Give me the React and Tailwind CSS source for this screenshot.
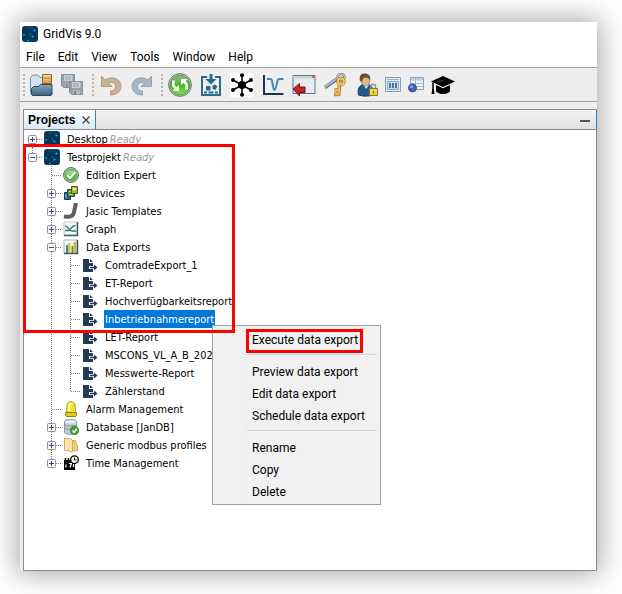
const MENUS = ["File", "Edit", "View", "Tools", "Window", "Help"];

/* ---------- toolbar icons ---------- */

function OpenIcon() {
    return (
        <svg width="24" height="24" viewBox="0 0 24 24">
            <defs>
                <linearGradient id="openFront" x1="0" y1="0" x2="0" y2="1">
                    <stop offset="0" stopColor="#86a3bd" />
                    <stop offset="1" stopColor="#3c627f" />
                </linearGradient>
                <linearGradient id="openBox" x1="0" y1="0" x2="0" y2="1">
                    <stop offset="0" stopColor="#fbd9a0" />
                    <stop offset="1" stopColor="#e0943a" />
                </linearGradient>
            </defs>
            <path d="M.5 20V4.500L3 2h5l2 2.500h4V20z" fill="#d5e1f0" stroke="#7d8fa6" />
            <path d="M12.500 1.500h9v9h-9z" fill="url(#openBox)" stroke="#8a6535" />
            <path d="M12.500 5h9" stroke="#b98543" />
            <path d="M1.500 15.500l2-2h5l2-2h11.500v10l-1 1H2.500l-1-1z" fill="url(#openFront)" stroke="#2b465c" />
        </svg>
    );
}

function Floppy({ x, y }) {
    return (
        <g transform={`translate(${x} ${y})`}>
            <path d="M.5.5h13v13h-11l-2-2z" fill="#97a1aa" stroke="#858f98" />
            <path d="M3 1h8.500v6H3z" fill="#c9ced2" />
            <path d="M4 3h6M4 5h6" stroke="#9aa3aa" />
            <path d="M4 9.500h7V13H4z" fill="#b9bfc4" />
            <path d="M5 10h2v3H5z" fill="#7c868f" />
        </g>
    );
}

function SaveAllIcon() {
    return (
        <svg width="24" height="24" viewBox="0 0 24 24">
            <Floppy x={0} y={1} />
            <Floppy x={8} y={8} />
        </svg>
    );
}

function UndoIcon() {
    return (
        <svg width="24" height="24" viewBox="0 0 24 24">
            <path
                d="M2.500 3v10.500H13L9.500 10c3-1.800 7 .200 7 3.700 0 2.800-2.200 4.300-5 4.300v4c6 0 10.500-3.400 10.500-8.800C22 6 13 2.200 6.300 7z"
                fill="#c9b296"
                stroke="#b39d82"
            />
        </svg>
    );
}

function RedoIcon() {
    return (
        <svg width="24" height="24" viewBox="0 0 24 24">
            <path
                d="M21.500 3v10.500H11L14.500 10c-3-1.800-7 .200-7 3.700 0 2.800 2.200 4.300 5 4.300v4C6.500 22 2 18.600 2 13.200 2 6 11 2.200 17.700 7z"
                fill="#a3b7c6"
                stroke="#8da3b3"
            />
        </svg>
    );
}

function SyncIcon() {
    return (
        <svg width="24" height="24" viewBox="0 0 24 24">
            <defs>
                <linearGradient id="syncFill" x1="0" y1="0" x2="0" y2="1">
                    <stop offset="0" stopColor="#93b98a" />
                    <stop offset=".5" stopColor="#4cb52c" />
                    <stop offset="1" stopColor="#7bea3c" />
                </linearGradient>
            </defs>
            <circle cx="12" cy="12" r="11.400" fill="#c0c4be" stroke="#6e766c" />
            <circle cx="12" cy="12" r="9.800" fill="url(#syncFill)" stroke="#49913a" strokeWidth=".8" />
            <path d="M4 7.500h3l-.5 4.500 2 2.300L11 12v6H4.500l2-2.200L4 13z" fill="#fff" />
            <path d="M20 16.500h-3l.5-4.500-2-2.300L13 12V6h6.500l-2 2.200L20 11z" fill="#fff" />
        </svg>
    );
}

function ImportIcon() {
    return (
        <svg width="24" height="24" viewBox="0 0 24 24" fill="none" stroke="#2b6c8c">
            <path d="M8 4H3v18h18V4h-5" strokeWidth="2" />
            <path d="M12 1v6" strokeWidth="3" />
            <path d="M6.500 6h11L12 11.500z" fill="#2b6c8c" stroke="none" />
            <path d="M7 13h4.500v4.500H7zM13.500 12.500l2.500-1 2.500 2-2 3.500-3-1z" fill="#2b6c8c" stroke="none" />
            <path d="M5 19.500h3M9.500 19.500h5M16 19.500h3" strokeWidth="2" />
        </svg>
    );
}

function HubIcon() {
    return (
        <svg width="24" height="24" viewBox="0 0 24 24">
            <path d="M0 0h24v24H0z" fill="#fff" />
            <path d="M12 2v20M3 7l18 10M21 7L3 17" stroke="#000" strokeWidth="1.500" />
            <circle cx="12" cy="12" r="4" />
            <circle cx="12" cy="2.200" r="2" />
            <circle cx="12" cy="21.800" r="2" />
            <circle cx="3" cy="7" r="2" />
            <circle cx="21" cy="7" r="2" />
            <circle cx="3" cy="17" r="2" />
            <circle cx="21" cy="17" r="2" />
        </svg>
    );
}

function CurveIcon() {
    return (
        <svg width="24" height="24" viewBox="0 0 24 24" fill="none">
            <path d="M3 2v19H22.500" stroke="#1c3252" strokeWidth="2" />
            <path d="M6 6h3.500c1.500 0 1.500 2 2 4.500S12.500 17 13.500 17s2-5 2.500-7 .500-4 2-4h4.500" stroke="#4a84bd" strokeWidth="2" />
        </svg>
    );
}

function BackWindowIcon() {
    return (
        <svg width="24" height="24" viewBox="0 0 24 24">
            <path d="M1 2.500h22v18H1z" fill="#e6edf0" stroke="#5b7482" />
            <path d="M1.500 3h21v2.500h-21z" fill="#c3d1d8" />
            <path d="M20.500 3h2v2h-2z" fill="#e0473c" />
            <path d="M1 16l6.500-5.500V14H13v5.500H7.500V23z" fill="#c4272b" stroke="#7e1013" />
        </svg>
    );
}

function KeysIcon() {
    return (
        <svg width="24" height="24" viewBox="0 0 24 24">
            <path d="M2 14.500L14 6" stroke="#6d7880" strokeWidth="3.500" />
            <path d="M2 14L14 5.500" stroke="#c4ccd1" strokeWidth="1.500" />
            <circle cx="18" cy="4.500" r="3.500" fill="none" stroke="#7d8388" strokeWidth="2.600" />
            <circle cx="18" cy="4.500" r="3.500" fill="none" stroke="#c5cbd0" strokeWidth="1.200" />
            <circle cx="18" cy="8.500" r="3" fill="none" stroke="#9b6a1b" strokeWidth="3.400" />
            <circle cx="18" cy="8.500" r="3" fill="none" stroke="#f5cd62" strokeWidth="2" />
            <path d="M16.500 12l-1 11M15.500 17h-4M15 21.500h-4" stroke="#a5701c" strokeWidth="3.500" />
            <path d="M16.500 11l-1 11.500M15.500 17H12M15 21.500h-3.500" stroke="#f3c04c" strokeWidth="2" />
        </svg>
    );
}

function UserLockIcon() {
    return (
        <svg width="24" height="24" viewBox="0 0 24 24">
            <path d="M4.500 22C3 15 6 12.500 9 11.500h5c4 1 5.500 4 5 10.500-5 1.500-10 1.500-14.500 0z" fill="#235a8e" stroke="#143c62" />
            <path d="M10 12l2 4 3-4z" fill="#e4eef5" />
            <path d="M7 6c0-6 9-6 9 0 0 4-2 7-4.500 7S7 10 7 6z" fill="#e2b48a" stroke="#8d6743" strokeWidth=".6" />
            <path d="M6 8C4.800 2 7.500.5 10.500.5c4 0 6.500 2.500 5.500 6L13 4.500 9.500 5 8 8.500z" fill="#6a4f37" />
            <path d="M17 16v-2.500c0-3 4.500-3 4.500 0V16" fill="none" stroke="#8f969a" strokeWidth="1.500" />
            <path d="M15.500 15.500h8v7h-8z" fill="#f0d656" stroke="#8a7420" />
            <path d="M19.500 18v2.500" stroke="#725c10" />
        </svg>
    );
}

function PanelIcon() {
    return (
        <svg width="16" height="16" viewBox="0 0 16 16">
            <path d="M.5.5h15v14H.5z" fill="#e3ebf3" stroke="#849cb4" />
            <path d="M2 2.500h12" stroke="#9bb4cb" />
            <path d="M2.500 4.500h11v8h-11z" fill="#c8d9e8" stroke="#8eaac5" />
            <path d="M5 6v5M8 6v5M11 6v5" stroke="#487aa6" strokeWidth="2" />
        </svg>
    );
}

function TableBallIcon() {
    return (
        <svg width="16" height="16" viewBox="0 0 16 16">
            <path d="M2.500.5h13v12h-13z" fill="#f2f6fa" stroke="#8ba1b6" />
            <path d="M3 1h12v2.500H3z" fill="#b9cfe3" />
            <path d="M3 6.500h12M3 9.500h12M7.500 1v11" stroke="#a5b9cb" />
            <circle cx="4.500" cy="11" r="4" fill="#4660b8" stroke="#293d80" strokeWidth=".8" />
            <circle cx="3.500" cy="9.600" r="1.500" fill="#8ea3e6" />
        </svg>
    );
}

function GraduationIcon() {
    return (
        <svg width="24" height="24" viewBox="0 0 24 24">
            <path d="M12 3l12 5.500L12 14 0 8.500z" />
            <path d="M5 12l7 3.200L19 12v6.500c-3.500 3.400-10.500 3.400-14 0z" />
            <path d="M2 9.500v8" stroke="#000" strokeWidth="1.500" />
            <path d="M.5 21l.800-5h1.500l.800 5z" />
            <path d="M6 8.700l6-1" stroke="#777" strokeWidth=".6" />
        </svg>
    );
}

const TOOL_GROUPS = [
    [
        { label: "Open project", Icon: OpenIcon },
        { label: "Save all", Icon: SaveAllIcon },
    ],
    [
        { label: "Undo", Icon: UndoIcon },
        { label: "Redo", Icon: RedoIcon },
    ],
    [
        { label: "Synchronise", Icon: SyncIcon },
        { label: "Import", Icon: ImportIcon },
        { label: "Topology", Icon: HubIcon },
        { label: "Event browser", Icon: CurveIcon },
        { label: "Reset windows", Icon: BackWindowIcon },
        { label: "Licenses", Icon: KeysIcon },
        { label: "Users", Icon: UserLockIcon },
        { label: "Charts", Icon: PanelIcon },
        { label: "Tables", Icon: TableBallIcon },
        { label: "Tutorials", Icon: GraduationIcon },
    ],
];

/* ---------- tree icons ---------- */

function LogoIcon() {
    return (
        <svg width="16" height="16" viewBox="0 0 16 16" className="shrink-0">
            <rect width="16" height="16" rx="3" fill="#04375a" />
            <path d="M4 0h8v3H4z" fill="#0a4164" />
            <circle cx="12.500" cy="4.500" r="1.100" fill="#1fb6e8" />
            <circle cx="8.500" cy="8" r=".8" fill="#1d94c4" />
            <circle cx="10.500" cy="10.500" r="1" fill="#1fb6e8" />
            <circle cx="2" cy="9" r=".9" fill="#1d9fd0" />
            <circle cx="6" cy="14.500" r=".8" fill="#22c0ee" />
        </svg>
    );
}

function CheckIcon() {
    return (
        <svg width="16" height="16" viewBox="0 0 16 16">
            <circle cx="8" cy="8" r="7.500" fill="#b9c2b8" stroke="#69766a" />
            <circle cx="8" cy="8" r="6.300" fill="#55b63e" />
            <path d="M2.500 6.500a6 6 0 0 1 11 0C10 9 6 9 2.500 6.500z" fill="#93d183" />
            <path d="M4 8l3 3 5.500-6" fill="none" stroke="#fff" strokeWidth="2" />
        </svg>
    );
}

function DevicesIcon() {
    return (
        <svg width="16" height="16" viewBox="0 0 16 16">
            <path d="M1.500 7.500h6v7h-6z" fill="#2f62a8" stroke="#173c70" />
            <path d="M4.500 4.500h7v7h-7z" fill="#4d8f3a" stroke="#1e5420" />
            <path d="M8.500 1.500h6v7h-6z" fill="#a9b83c" stroke="#4a5a10" />
            <path d="M10 3h3v2h-3z" fill="#e9efa4" />
            <path d="M6 6.500h2M6 9.500h4M3 9.500v3" stroke="#b4dc8c" />
        </svg>
    );
}

function JasicIcon() {
    return (
        <svg width="16" height="16" viewBox="0 0 16 16">
            <path d="M13 0L10.800 10c-.8 3.400-4 4.500-9.800 3.500" fill="none" stroke="#5d5f61" strokeWidth="4" />
        </svg>
    );
}

function GraphIcon() {
    return (
        <svg width="16" height="16" viewBox="0 0 16 16">
            <path d="M1 1h13v13H1z" fill="#f4faf7" stroke="#b8c6c2" />
            <path d="M14.500 1v13.500H1" fill="none" stroke="#45605d" strokeWidth="1.500" />
            <path d="M2 5c3 0 4 5 7 5h4" fill="none" stroke="#26865c" strokeWidth="1.300" />
            <path d="M2 9.500h3C8 9 8 4.500 12.500 4.500" fill="none" stroke="#3c6f76" strokeWidth="1.300" />
        </svg>
    );
}

function BarsIcon() {
    return (
        <svg width="16" height="16" viewBox="0 0 16 16">
            <path d="M1 1h13v13H1z" fill="#f5f8f9" stroke="#a9b7bd" />
            <path d="M14.500 1v13.500H1" fill="none" stroke="#405866" strokeWidth="1.500" />
            <path d="M3 6h2v8H3z" fill="#3d80a8" />
            <path d="M5 4h2.500v10H5z" fill="#dbc63a" />
            <path d="M8.500 7h2v7h-2z" fill="#4b9a5b" />
            <path d="M10.500 3h2.500v11h-2.500z" fill="#d5b72c" />
        </svg>
    );
}

function ExportIcon() {
    return (
        <svg width="16" height="16" viewBox="0 0 16 16">
            <path d="M1 2h6v4h4v3H7v3h4v3H1z" fill="#243a56" />
            <path d="M8 2l3 3H8z" fill="#243a56" />
            <path d="M8 10.500h5" stroke="#243a56" strokeWidth="1.600" />
            <path d="M12 7.500l3.500 3-3.500 3z" fill="#243a56" />
        </svg>
    );
}

function AlarmIcon() {
    return (
        <svg width="16" height="16" viewBox="0 0 16 16">
            <path d="M3.500 12L4 4c.5-4.600 7.500-4.600 8 0l.5 8z" fill="#f4e32c" stroke="#b5a11a" />
            <path d="M6 10.500l.5-6C6.800 3 7.500 2.500 8.500 2.500" fill="none" stroke="#fffbb5" strokeWidth="2" />
            <path d="M2.500 11.500h11v3l-1 1h-9l-1-1z" fill="#e0cd22" stroke="#8b7c18" />
        </svg>
    );
}

function DatabaseIcon() {
    return (
        <svg width="16" height="16" viewBox="0 0 16 16">
            <path d="M1.500 2.500c0-2.600 12-2.600 12 0v11c0 2.400-12 2.400-12 0z" fill="#c3d0d6" stroke="#8c9aa1" />
            <ellipse cx="7.500" cy="2.700" rx="5.500" ry="1.500" fill="#e6eef1" />
            <path d="M2 6c2 1.500 9 1.500 11 0M2 9.500c2 1.500 9 1.500 11 0" fill="none" stroke="#7f9099" />
            <circle cx="11.500" cy="11.500" r="4.200" fill="#3fa535" stroke="#297022" strokeWidth=".7" />
            <path d="M9.500 11.500l1.500 1.800 3-3.500" fill="none" stroke="#fff" strokeWidth="1.500" />
        </svg>
    );
}

function FolderIcon() {
    return (
        <svg width="16" height="16" viewBox="0 0 16 16">
            <path d="M7 3.500h5.500l1 4 1 1v5l-1 .5H7z" fill="#f1cd78" stroke="#cfa95a" />
            <path d="M1.500 1.500h6l2 2v11l-2 .5-1.500-1.500H1.500z" fill="#f9e3a6" stroke="#cfa95a" />
            <path d="M3 2.500v10.500" stroke="#fdf3d0" />
        </svg>
    );
}

function TimeIcon() {
    return (
        <svg width="16" height="16" viewBox="0 0 16 16">
            <path d="M1 5h11v10H1z" />
            <path d="M3 9.500v3M6 8.500h2.500l-1.500 4M10.500 9v3" fill="none" stroke="#fff" strokeWidth="1.200" />
            <path d="M2.500 3v3M5.500 3v3" stroke="#000" strokeWidth="1.500" />
            <circle cx="11.500" cy="4.700" r="3.800" fill="#fff" stroke="#000" strokeWidth="1.300" />
            <path d="M11.500 2.500v2.500h2" fill="none" stroke="#000" />
        </svg>
    );
}

/* ---------- tree ---------- */

// guides: one entry per indent level. v = line passes, t = branch, l = last branch,
// d = line going down only, n = nothing
const ROWS = [
    { label: "Desktop", status: "Ready", Icon: LogoIcon, guides: "d", box: "+" },
    { label: "Testprojekt", status: "Ready", Icon: LogoIcon, guides: "l", box: "-" },
    { label: "Edition Expert", Icon: CheckIcon, guides: "nt" },
    { label: "Devices", Icon: DevicesIcon, guides: "nt", box: "+" },
    { label: "Jasic Templates", Icon: JasicIcon, guides: "nt", box: "+" },
    { label: "Graph", Icon: GraphIcon, guides: "nt", box: "+" },
    { label: "Data Exports", Icon: BarsIcon, guides: "nt", box: "-" },
    { label: "ComtradeExport_1", Icon: ExportIcon, guides: "nvt" },
    { label: "ET-Report", Icon: ExportIcon, guides: "nvt" },
    { label: "Hochverfügbarkeitsreport", Icon: ExportIcon, guides: "nvt" },
    { label: "Inbetriebnahmereport", Icon: ExportIcon, guides: "nvt", selected: true },
    { label: "LET-Report", Icon: ExportIcon, guides: "nvt" },
    { label: "MSCONS_VL_A_B_202", Icon: ExportIcon, guides: "nvt" },
    { label: "Messwerte-Report", Icon: ExportIcon, guides: "nvt" },
    { label: "Zählerstand", Icon: ExportIcon, guides: "nvl" },
    { label: "Alarm Management", Icon: AlarmIcon, guides: "nt" },
    { label: "Database [JanDB]", Icon: DatabaseIcon, guides: "nt", box: "+" },
    { label: "Generic modbus profiles", Icon: FolderIcon, guides: "nt", box: "+" },
    { label: "Time Management", Icon: TimeIcon, guides: "nl", box: "+" },
];

const GUIDE_PATHS = {
    n: "",
    v: "M8.500 0v18",
    t: "M8.500 0v18M9 9.500h9",
    l: "M8.500 0v9M9 9.500h9",
    d: "M8.500 9v9M9 9.500h9",
};

function Guide({ kind, box }) {
    return (
        <svg width="19" height="18" viewBox="0 0 19 18" className="shrink-0" aria-hidden="true">
            <path d={GUIDE_PATHS[kind]} fill="none" stroke="#808080" strokeDasharray="1 1" />
            {box && (
                <>
                    <rect x="4.500" y="5.500" width="8" height="8" rx="1" fill="#f6f6f6" stroke="#919191" />
                    <path d={box === "+" ? "M6 9.500h5M8.500 7v5" : "M6 9.500h5"} stroke="#34508f" />
                </>
            )}
        </svg>
    );
}

function TreeRow({ row }) {
    const { label, status, Icon, guides, box, selected } = row;
    return (
        <li
            role="treeitem"
            aria-level={guides.length}
            aria-selected={!!selected}
            className="flex h-[18px] items-center whitespace-nowrap leading-[17px]"
        >
            {guides.split("").map((kind, i) => (
                <Guide key={i} kind={kind} box={i === guides.length - 1 ? box : null} />
            ))}
            <span className="ml-px mr-1.5 shrink-0">
                <Icon />
            </span>
            <span className={selected ? "h-[18px] bg-[#0078d7] px-px pt-px text-white" : "h-[18px] px-px pt-px"}>
                {label}
            </span>
            {status && <span className="ml-px h-[18px] pt-px italic text-[#999999]">{status}</span>}
        </li>
    );
}

/* ---------- context menu ---------- */

const MENU_GROUPS = [
    ["Execute data export"],
    ["Preview data export", "Edit data export", "Schedule data export"],
    ["Rename", "Copy", "Delete"],
];

function ContextMenu() {
    return (
        <div
            role="menu"
            className="absolute left-[188px] top-[195px] w-[169px] border border-[#a0a0a0] bg-[#f1f1f1] pb-px pl-8 pr-[3px] pt-[3px] font-['Roboto',sans-serif] text-[12px]"
        >
            {MENU_GROUPS.map((group, i) => (
                <div key={i} className="border-l border-[#ececec]">
                    {i > 0 && <div role="separator" className="ml-px h-2.5 pt-[3px]"><div className="h-px bg-[#d4d4d4]" /></div>}
                    {group.map((item) => (
                        <button
                            key={item}
                            role="menuitem"
                            className="block h-[22px] w-full whitespace-nowrap pl-1.5 text-left leading-[22px]"
                        >
                            {item}
                        </button>
                    ))}
                </div>
            ))}
            <div className="pointer-events-none absolute left-[33px] top-[3px] h-6 w-[117px] border-3 border-[#fe0000]" />
        </div>
    );
}

export default function App() {
    return (
        <div className="flex min-h-screen bg-white pb-[23px] pl-5 pr-[25px] pt-[22px] font-['Roboto',sans-serif] text-[12px] text-black">
            <div className="flex flex-1 flex-col bg-[#eeeeee] shadow-[0_0_25px_3px_rgba(0,0,0,0.35)]">
                <header className="bg-white">
                    <div className="flex h-6 items-center gap-[5px] pl-0.5">
                        <LogoIcon />
                        <h1>GridVis 9.0</h1>
                    </div>
                    <nav className="flex h-[21px] items-center gap-[13px] pl-1.5">
                        {MENUS.map((menu) => (
                            <button key={menu}>{menu}</button>
                        ))}
                    </nav>
                </header>

                <div role="toolbar" className="flex h-[35px] items-center gap-[7px] border-y border-[#a0a0a0] pl-[3px]">
                    {TOOL_GROUPS.map((group, i) => (
                        <div key={i} className="flex items-center gap-[7px]">
                            <span className="-mr-[3px] flex w-[3px] flex-col gap-0.5">
                                {[0, 1, 2, 3, 4, 5].map((dot) => (
                                    <span key={dot} className="size-0.5 bg-[#b4b4b4]" />
                                ))}
                            </span>
                            {group.map(({ label, Icon }) => (
                                <button key={label} aria-label={label}>
                                    <Icon />
                                </button>
                            ))}
                        </div>
                    ))}
                </div>

                <main className="ml-[3px] mt-[7px] flex flex-1 flex-col border border-[#8a8a96] bg-white">
                    <div className="-mr-px flex h-5 items-stretch justify-between border-b border-[#8a8a96] bg-linear-to-b from-[#f2f2f2] to-[#e2e2e2]">
                        <div className="flex items-center gap-1.5 border-r border-[#3b7fb4] bg-linear-to-b from-white to-[#d9e8f8] px-1">
                            <span className="font-['Liberation_Sans'] text-[12px] font-bold">Projects</span>
                            <button aria-label="Close Projects">
                                <svg width="10" height="10" viewBox="0 0 10 10">
                                    <path d="M1.500 1.500l7 7M8.500 1.500l-7 7" stroke="#444" strokeWidth="1.300" />
                                </svg>
                            </button>
                        </div>
                        <button aria-label="Minimize" className="border-r border-[#3b7fb4] pr-1.5">
                            <span className="mt-0.5 block h-0.5 w-2.5 bg-[#555555]" />
                        </button>
                    </div>

                    <div className="relative flex-1">
                        <ul role="tree" className="font-['DejaVu_Sans_Condensed','DejaVu_Sans'] text-[11px]">
                            {ROWS.map((row) => (
                                <TreeRow key={row.label} row={row} />
                            ))}
                        </ul>
                        <ContextMenu />
                        {/* highlight frame around the project branch */}
                        <div className="pointer-events-none absolute -left-px top-3.5 h-[189px] w-[212px] border-3 border-[#fe0000]" />
                    </div>
                </main>
            </div>
        </div>
    );
}
